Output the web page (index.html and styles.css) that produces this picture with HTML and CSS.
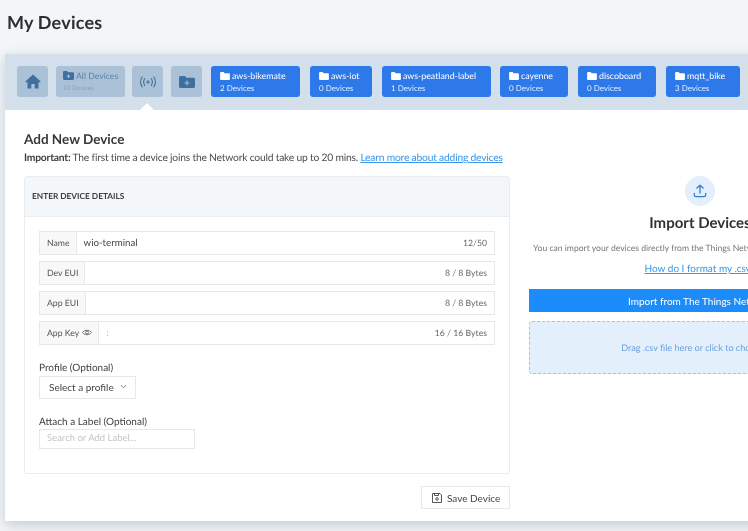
FILE: index.html
```html
<!DOCTYPE html>
<html lang="en">
<head>
<meta charset="utf-8">
<title>My Devices</title>
<link rel="stylesheet" href="styles.css">
</head>
<body>
<h1 class="page-title">My Devices</h1>
<main class="panel">
  <nav class="toolbar">
    <a class="tile tile-icon"><svg width="16" height="15" viewBox="0 0 16 15"><path fill="#3f6f9f" d="M8 0.5 0.3 7.6 1.4 8.8 2.5 7.8V14.5H6.3V10H9.7V14.5H13.5V7.8L14.6 8.8 15.7 7.6Z"/></svg></a>
    <a class="tile tile-all">
      <span class="tile-name muted"><svg class="folder" width="11" height="9" viewBox="0 0 11 9"><path fill="#3f6f9f" d="M0 1.2C0 .5.5 0 1.2 0H4L5 1.3H9.8C10.5 1.3 11 1.8 11 2.5V7.8C11 8.5 10.5 9 9.8 9H1.2C.5 9 0 8.500 0 7.800Z"/><path fill="#abc1d8" d="M5 3.500H6V4.800H7.200V5.800H6V7H5V5.800H3.800V4.800H5Z"/></svg>All Devices</span>
      <span class="tile-count faint">10 Devices</span>
    </a>
    <a class="tile tile-icon"><svg width="18" height="12" viewBox="0 0 18 12" fill="none" stroke="#3f6f9f" stroke-width="1.100" stroke-linecap="round"><path d="M3.200 1C1.200 4 1.200 8 3.200 11M5.700 2.500C4.500 4.500 4.500 7.500 5.700 9.500M14.800 1C16.800 4 16.800 8 14.800 11M12.300 2.500C13.500 4.500 13.500 7.500 12.300 9.500M7.600 6H10.400M9 4.600V7.400"/></svg></a>
    <a class="tile tile-icon tile-add"><svg width="16" height="12" viewBox="0 0 16 12"><path fill="#3f6f9f" d="M0 1.500C0 .7.700 0 1.500 0H6L7.500 1.700H14.500C15.300 1.700 16 2.400 16 3.200V10.500C16 11.300 15.300 12 14.500 12H1.500C.7 12 0 11.300 0 10.500Z"/><path fill="#abc1d8" d="M7.500 4.500H8.500V6.500H10.500V7.500H8.500V9.500H7.500V7.500H5.500V6.500H7.500Z"/></svg></a>
    <a class="tile tile-label tile-bikemate">
      <span class="tile-name"><svg class="folder" width="10" height="8" viewBox="0 0 11 9"><path fill="#fff" d="M0 1.200C0 .5.500 0 1.200 0H4L5 1.300H9.800C10.500 1.300 11 1.800 11 2.500V7.800C11 8.500 10.500 9 9.800 9H1.200C.5 9 0 8.500 0 7.800Z"/></svg>aws-bikemate</span>
      <span class="tile-count">2 Devices</span>
    </a>
    <a class="tile tile-label tile-iot">
      <span class="tile-name"><svg class="folder" width="10" height="8" viewBox="0 0 11 9"><path fill="#fff" d="M0 1.200C0 .5.500 0 1.200 0H4L5 1.300H9.800C10.500 1.300 11 1.800 11 2.500V7.800C11 8.500 10.500 9 9.800 9H1.200C.5 9 0 8.500 0 7.800Z"/></svg>aws-iot</span>
      <span class="tile-count">0 Devices</span>
    </a>
    <a class="tile tile-label tile-peatland">
      <span class="tile-name"><svg class="folder" width="10" height="8" viewBox="0 0 11 9"><path fill="#fff" d="M0 1.200C0 .5.500 0 1.200 0H4L5 1.300H9.800C10.500 1.300 11 1.800 11 2.500V7.800C11 8.500 10.500 9 9.800 9H1.200C.5 9 0 8.500 0 7.800Z"/></svg>aws-peatland-label</span>
      <span class="tile-count">1 Devices</span>
    </a>
    <a class="tile tile-label tile-cayenne">
      <span class="tile-name"><svg class="folder" width="10" height="8" viewBox="0 0 11 9"><path fill="#fff" d="M0 1.200C0 .5.500 0 1.200 0H4L5 1.300H9.800C10.500 1.300 11 1.800 11 2.500V7.800C11 8.500 10.500 9 9.800 9H1.200C.5 9 0 8.500 0 7.800Z"/></svg>cayenne</span>
      <span class="tile-count">0 Devices</span>
    </a>
    <a class="tile tile-label tile-disco">
      <span class="tile-name"><svg class="folder" width="10" height="8" viewBox="0 0 11 9"><path fill="#fff" d="M0 1.200C0 .5.500 0 1.200 0H4L5 1.300H9.800C10.500 1.300 11 1.800 11 2.500V7.800C11 8.500 10.500 9 9.800 9H1.200C.5 9 0 8.500 0 7.800Z"/></svg>discoboard</span>
      <span class="tile-count">0 Devices</span>
    </a>
    <a class="tile tile-label tile-mqtt">
      <span class="tile-name"><svg class="folder" width="10" height="8" viewBox="0 0 11 9"><path fill="#fff" d="M0 1.200C0 .5.500 0 1.200 0H4L5 1.300H9.800C10.500 1.300 11 1.800 11 2.500V7.800C11 8.500 10.500 9 9.800 9H1.200C.5 9 0 8.500 0 7.800Z"/></svg>mqtt_bike</span>
      <span class="tile-count">3 Devices</span>
    </a>
    <span class="notch"></span>
  </nav>

  <section class="content">
    <h2 class="section-title">Add New Device</h2>
    <p class="intro"><strong>Important:</strong> The first time a device joins the Network could take up to 20 mins. <a class="link" href="#">Learn more about adding devices</a></p>

    <div class="columns">
      <div class="form-col">
        <div class="form-card">
          <div class="form-head">ENTER DEVICE DETAILS</div>
          <div class="form-body">
            <div class="rows">
              <div class="field"><span class="addon">Name</span><span class="value">wio-terminal</span><span class="counter">12/50</span></div>
              <div class="field"><span class="addon">Dev EUI</span><span class="value"></span><span class="counter">8 / 8 Bytes</span></div>
              <div class="field"><span class="addon">App EUI</span><span class="value"></span><span class="counter">8 / 8 Bytes</span></div>
              <div class="field"><span class="addon">App Key <svg class="eye" width="10" height="7" viewBox="0 0 10 7" fill="none" stroke="#555" stroke-width=".8"><path d="M.5 3.500C2.500.6 7.500.6 9.500 3.500 7.500 6.400 2.500 6.400.5 3.500Z"/><circle cx="5" cy="3.500" r="1.500"/></svg></span><span class="value value-key">:</span><span class="counter">16 / 16 Bytes</span></div>
            </div>
            <label class="opt-label opt-profile">Profile (Optional)</label>
            <button class="select-btn">Select a profile <svg width="7" height="5" viewBox="0 0 7 5" fill="none" stroke="#666" stroke-width=".8"><path d="M.8 1 3.500 3.800 6.200 1"/></svg></button>
            <label class="opt-label opt-attach">Attach a Label (Optional)</label>
            <div class="label-input">Search or Add Label...</div>
          </div>
        </div>
        <div class="actions">
          <button class="save-btn"><svg width="10" height="10" viewBox="0 0 10 10" fill="none" stroke="#444" stroke-width=".9"><path d="M.5.500H8L9.500 2V9.500H.5Z"/><path d="M2.500.5V2.500H6.500V.5"/><circle cx="5" cy="6" r="1.300"/></svg>Save Device</button>
        </div>
      </div>

      <aside class="import-col">
        <div class="import-icon"><svg width="14" height="14" viewBox="0 0 14 14" fill="none" stroke="#2f7fd6" stroke-width="1.300" stroke-linecap="round" stroke-linejoin="round"><path d="M7 9V1.200M3.900 4 7 1.200 10.100 4M1.300 9.500V11C1.300 12 2 12.600 3 12.600H11C12 12.600 12.700 12 12.700 11V9.500"/></svg></div>
        <h3 class="import-title">Import Devices</h3>
        <p class="import-text">You can import your devices directly from the Things Network or upload a .csv file below.</p>
        <a class="import-link link" href="#">How do I format my .csv?</a>
        <button class="import-btn">Import from The Things Network</button>
        <div class="drop">Drag .csv file here or click to choose file</div>
      </aside>
    </div>
  </section>
</main>
</body>
</html>
```

FILE: styles.css
```css
* { box-sizing: border-box; }
html, body { margin: 0; height: 531px; overflow: hidden; }
body {
  width: 748px;
  background: #f3f6f8;
  font-family: "Lato", "Liberation Sans", sans-serif;
  text-rendering: geometricPrecision;
  color: #333;
  padding: 13px 0 0 5px;
}
.page-title {
  margin: 0 0 22px 2px;
  font-size: 18px;
  line-height: 19px;
  font-weight: 700;
  color: #2b2f33;
  letter-spacing: .2px;
  filter: blur(.3px);
}
.panel {
  width: 900px;
  height: 467px;
  background: #fff;
  box-shadow: 0 4px 12px rgba(60, 80, 100, .25);
  filter: blur(.3px);
}
.toolbar {
  position: relative;
  height: 56px;
  background: #d3e0ec;
  padding: 12px 0 0 12px;
  display: flex;
  align-items: flex-start;
}
.tile {
  height: 31px;
  border-radius: 3px;
  margin-right: 8px;
  flex: none;
}
.tile-icon {
  width: 31px;
  background: #abc1d8;
  display: flex;
  align-items: center;
  justify-content: center;
}
.tile-add { margin-right: 9px; }
.tile-all, .tile-label {
  display: flex;
  flex-direction: column;
  justify-content: center;
  padding-left: 7px;
  gap: 3px;
}
.tile-all { width: 69px; background: #abc1d8; margin-right: 7px; }
.tile-label { background: #2d79ea; color: #fff; padding-left: 9px; margin-right: 10px; }
.tile-bikemate { width: 89px; }
.tile-iot { width: 62px; }
.tile-peatland { width: 109px; margin-right: 9px; }
.tile-cayenne { width: 68px; }
.tile-disco { width: 78px; }
.tile-mqtt { width: 74px; }
.tile-name { font-size: 8.800px; line-height: 10px; white-space: nowrap; display: flex; align-items: center; }
.tile-count { font-size: 8px; line-height: 9px; white-space: nowrap; opacity: .85; }
.tile-all .tile-name { font-size: 8.700px; }
.muted { color: #5f83a8; }
.faint { color: #7f9dbc; font-size: 6.300px; }
.folder { margin-right: 2px; flex: none; }
.notch {
  position: absolute;
  left: 135px;
  bottom: 0;
  width: 0;
  height: 0;
  border-left: 7px solid transparent;
  border-right: 7px solid transparent;
  border-bottom: 7px solid #fff;
}
.content { padding: 21px 19px 0; }
.section-title {
  margin: 0;
  font-size: 13.500px;
  line-height: 16px;
  font-weight: 700;
  color: #35393d;
}
.intro {
  margin: 4px 0 0;
  font-size: 10.300px;
  line-height: 14px;
  color: #4a4f54;
  letter-spacing: -.21px;
}
.intro strong { color: #3a3f44; }
.link { color: #3a96e8; text-decoration: underline; }
.columns { display: flex; margin-top: 11px; align-items: flex-start; }
.form-col { width: 486px; flex: none; }
.form-card {
  height: 298px;
  border: 1px solid #e9edf0;
  border-radius: 3px;
}
.form-head {
  height: 40px;
  background: #f4f7f9;
  border-bottom: 1px solid #e9edf0;
  font-size: 8.300px;
  font-weight: 700;
  line-height: 38px;
  padding-left: 7px;
  color: #3a3f44;
}
.form-body { padding: 14px 14px 0; }
.rows { display: flex; flex-direction: column; gap: 6px; }
.field {
  height: 24px;
  display: flex;
  align-items: center;
  border: 1px solid #e6e8ea;
  font-size: 8.700px;
}
.addon {
  height: 100%;
  background: #f8f8f8;
  border-right: 1px solid #e6e8ea;
  padding: 0 6px 1px 7px;
  display: flex;
  align-items: center;
  gap: 3px;
  color: #555;
}
.value { flex: 1; padding: 0 0 1px 7px; font-size: 9.700px; color: #444; }
.value-key { color: #bbb; }
.counter { padding: 0 7px 1px 0; color: #666; }
.opt-label { display: block; font-size: 10px; line-height: 12px; color: #3d4145; }
.opt-profile { margin-top: 17px; }
.select-btn {
  display: flex;
  align-items: center;
  gap: 6px;
  width: 97px;
  height: 23px;
  margin-top: 2px;
  padding: 0 0 2px 9px;
  background: #fff;
  border: 1px solid #e6e8ea;
  font: inherit;
  font-size: 10px;
  color: #444;
}
.opt-attach { margin-top: 17px; }
.label-input {
  width: 156px;
  height: 20px;
  margin-top: 1px;
  padding-left: 7px;
  border: 1px solid #e6e8ea;
  font-size: 9.500px;
  line-height: 18px;
  color: #c2c5c8;
}
.actions { display: flex; justify-content: flex-end; margin-top: 12px; }
.save-btn {
  display: flex;
  align-items: center;
  gap: 5px;
  width: 89px;
  height: 23px;
  padding: 0 0 0 10px;
  background: #fff;
  border: 1px solid #e6e8ea;
  font: inherit;
  font-size: 10px;
  color: #444;
}
.import-col {
  width: 342px;
  margin-left: 19px;
  flex: none;
  display: flex;
  flex-direction: column;
  align-items: center;
  text-align: center;
}
.import-icon {
  width: 30px;
  height: 30px;
  border-radius: 50%;
  background: #e3effb;
  display: flex;
  align-items: center;
  justify-content: center;
}
.import-title {
  margin: 8px 0 0;
  font-size: 15px;
  line-height: 18px;
  font-weight: 700;
  color: #2e3235;
}
.import-text {
  margin: 10px 0 0;
  font-size: 8.600px;
  line-height: 12px;
  color: #777;
  white-space: nowrap;
}
.import-link { margin-top: 9px; font-size: 10px; line-height: 12px; }
.import-btn {
  width: 100%;
  height: 23px;
  margin-top: 14px;
  border: 0;
  background: #1b8cfa;
  color: #fff;
  font: inherit;
  font-size: 10px;
}
.drop {
  width: 100%;
  height: 53px;
  margin-top: 9px;
  background: #e3effb;
  border: 1px dashed #9cc4f0;
  border-radius: 3px;
  color: #6da2e0;
  font-size: 9.100px;
  line-height: 51px;
}
```
